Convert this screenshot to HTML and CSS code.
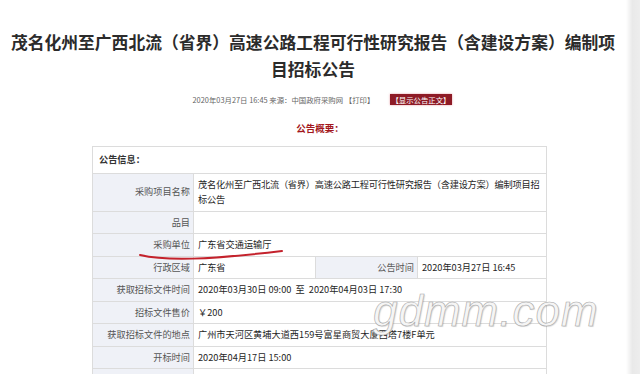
FILE: index.html
```html
<!DOCTYPE html>
<html lang="zh-CN">
<head>
    <meta charset="UTF-8">
    <meta name="viewport" content="width=device-width, initial-scale=1.0">
    <title>招标公告</title>
    <link rel="stylesheet" href="styles.css">
</head>
<body>
<div class="page">
    <div class="article">
        <h1 class="title">茂名化州至广西北流（省界）高速公路工程可行性研究报告（含建设方案）编制项目招标公告</h1>
        <div class="meta">
            <span>2020年03月27日 16:45 来源：中国政府采购网 【打印】</span>
            <span class="show-btn">【显示公告正文】</span>
        </div>
        <div class="summary-title">公告概要：</div>
        <div class="table-wrap">
            <table class="info-table">
                <colgroup>
                    <col class="c1">
                    <col class="c2">
                    <col class="c3">
                    <col class="c4">
                </colgroup>
                <tr>
                    <td colspan="4" class="head">公告信息：</td>
                </tr>
                <tr>
                    <td class="label">采购项目名称</td>
                    <td colspan="3" class="long">茂名化州至广西北流（省界）高速公路工程可行性研究报告（含建设方案）编制项目招标公告</td>
                </tr>
                <tr>
                    <td class="label">品目</td>
                    <td colspan="3"></td>
                </tr>
                <tr>
                    <td class="label">采购单位</td>
                    <td colspan="3">广东省交通运输厅</td>
                </tr>
                <tr>
                    <td class="label">行政区域</td>
                    <td>广东省</td>
                    <td class="label">公告时间</td>
                    <td>2020年03月27日 16:45</td>
                </tr>
                <tr>
                    <td class="label">获取招标文件时间</td>
                    <td colspan="3">2020年03月30日 09:00 &nbsp;至&nbsp; 2020年04月03日 17:30</td>
                </tr>
                <tr>
                    <td class="label">招标文件售价</td>
                    <td colspan="3">￥200</td>
                </tr>
                <tr>
                    <td class="label">获取招标文件的地点</td>
                    <td colspan="3">广州市天河区黄埔大道西159号富星商贸大厦西塔7楼F单元</td>
                </tr>
                <tr>
                    <td class="label">开标时间</td>
                    <td colspan="3">2020年04月17日 15:00</td>
                </tr>
                <tr>
                    <td class="label">开标地点</td>
                    <td colspan="3">广州市天河区黄埔大道西159号富星商贸大厦西塔7楼</td>
                </tr>
            </table>
            <!-- 手写红线 -->
            <svg class="underline" width="150" height="16" viewBox="0 0 150 16">
                <path d="M4 8 C 30 14, 70 13, 146 4" fill="none" stroke="#c4222c" stroke-width="2" stroke-linecap="round"/>
            </svg>
            <div class="watermark">gdmm.com</div>
        </div>
    </div>
    <div class="edge"></div>
</div>
</body>
</html>
```

FILE: styles.css
```css
* {
    box-sizing: border-box;
    margin: 0;
    padding: 0;
}
body {
    font-family: "Noto Sans CJK SC", "Liberation Sans", sans-serif;
    color: #333;
    background-color: #fff;
    overflow: hidden;
}
.page {
    display: flex;
    height: 374px;
}
.article {
    flex: 1;
}
.edge {
    width: 14px;
    background: linear-gradient(to right, #fff 0, #e9e9e9 45%, #ededed 100%);
}
.title {
    padding: 29px 8px 0;
    font-size: 16.8px;
    line-height: 27px;
    font-weight: bold;
    color: #2b2b2b;
    text-align: center;
}
.meta {
    margin-top: 10px;
    display: flex;
    justify-content: center;
    align-items: center;
    gap: 16px;
    padding-left: 18px;
    height: 12px;
    font-size: 7.4px;
    color: #666;
}
.show-btn {
    background-color: #8e1b26;
    color: #fff;
    padding: 0 1px;
    line-height: 11px;
    box-shadow: 0 0 2px rgba(200, 60, 80, 0.5);
}
.summary-title {
    margin-top: 16px;
    padding-left: 14px;
    text-align: center;
    font-size: 9.5px;
    line-height: 14px;
    font-weight: bold;
    color: #a3171d;
}
.table-wrap {
    position: relative;
    margin-top: 11px;
    margin-left: 92px;
    width: 454px;
}
.info-table {
    width: 100%;
    border-collapse: collapse;
    table-layout: fixed;
    font-size: 9.2px;
    line-height: 15.5px;
}
.info-table .c1 { width: 101px; }
.info-table .c2 { width: 122px; }
.info-table .c3 { width: 102px; }
.info-table .c4 { width: 129px; }
.info-table td {
    border: 1px solid #dcdcdc;
    padding: 3px 2px 3px 4px;
    color: #1e1e1e;
    vertical-align: middle;
}
.info-table td.long {
    letter-spacing: -0.2px;
}
.info-table td.head {
    padding: 5px 6px;
    height: 26px;
    font-weight: bold;
    color: #333;
}
.info-table td.label {
    background-color: #eff1f7;
    text-align: right;
    color: #555;
    padding-right: 3px;
}
.underline {
    position: absolute;
    left: 44px;
    top: 101px;
}
.watermark {
    position: absolute;
    left: 281px;
    top: 143px;
    font-family: "Liberation Sans", sans-serif;
    font-size: 44px;
    line-height: 1;
    font-style: italic;
    letter-spacing: 1px;
    color: #f5f5f5;
    -webkit-text-stroke: 0.6px #a8a8a8;
    text-shadow: 1px 1px 1px rgba(0, 0, 0, 0.15);
}
```
